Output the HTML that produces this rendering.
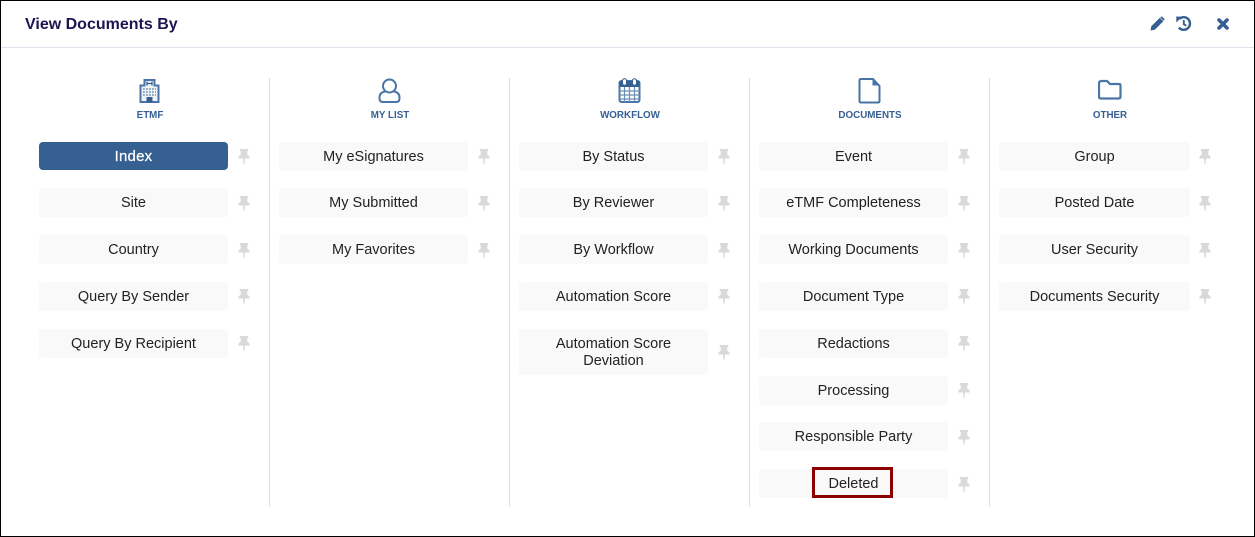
<!DOCTYPE html>
<html><head><meta charset="utf-8">
<style>
html,body{margin:0;padding:0;background:#fff}
#p{position:relative;width:1255px;height:537px;overflow:hidden;background:#fff;font-family:"Liberation Sans",sans-serif}
#f{position:absolute;left:0;top:0;width:1253px;height:535px;border:1px solid #000}
#hl{position:absolute;left:1px;top:47px;width:1253px;height:1px;background:#dce3ec}
#t{position:absolute;left:25px;top:14px;font-size:16px;font-weight:bold;color:#1f1450;line-height:22px}
.d{position:absolute;top:78px;width:1px;height:429px;background:#d9dfe8}
.b{position:absolute;width:189px;height:29px;border-radius:4px;background:#f9f9f9;color:#222;font-size:14.5px;line-height:30px;text-align:center}
.b.a{background:#376092;color:#fff;height:28px;font-size:15px;letter-spacing:.2px;-webkit-text-stroke:.25px #fff}
.b.w{line-height:17px;padding-top:7px;height:39px}
.h{position:absolute;top:109px;font-size:9.8px;font-weight:bold;line-height:13px;color:#376092;text-align:center;width:120px}
svg{position:absolute}
#r{position:absolute;left:812px;top:467px;width:75px;height:25px;border:3px solid #8b0000}
</style></head><body>
<div id="p">
<div id="f"></div><div id="hl"></div>
<div id="t">View Documents By</div>

<svg style="left:1150px;top:16px" width="15" height="15" viewBox="0 0 15 15"><path d="M.5 14.500l.8-4.300L9.800 1.700l3.500 3.500-8.500 8.500z" fill="#376092"/><path d="M10.800 .9q.8-.8 1.600 0l1.700 1.700q.8.8 0 1.600l-.5.5-3.300-3.300z" fill="#376092"/></svg>
<svg style="left:1175px;top:15px" width="17" height="17" viewBox="0 0 17 17"><path d="M4.500 3.800A6.300 6.300 0 1 1 3.800 12.500" fill="none" stroke="#376092" stroke-width="2.400"/><path d="M1.200 1.500l6 .2-5.800 5.800z" fill="#376092"/><path d="M8.800 5v4.200l2.500 1.500" fill="none" stroke="#376092" stroke-width="1.900"/></svg>
<svg style="left:1216px;top:17px" width="14" height="14" viewBox="0 0 14 14"><path d="M3 3l8 8M11 3l-8 8" stroke="#376092" stroke-width="3.600" stroke-linecap="round"/></svg>

<div class="d" style="left:269px"></div><div class="d" style="left:509px"></div><div class="d" style="left:749px"></div><div class="d" style="left:989px"></div>

<svg style="left:138px;top:78px" width="23" height="26" viewBox="0 0 23 26"><path d="M2.500 7.500H6.500V2h10v5.500h4V24h-18z" fill="#f0f4f8" stroke="#4a74a6" stroke-width="2"/><path d="M9 3.500v4M14 3.500v4M9 5.500h5" stroke="#376092" stroke-width="1.300"/><path d="M5 11h13M5 14h13M5 17h13" stroke="#6d8fb5" stroke-width="1.500" stroke-dasharray="1.800 1.200"/><rect x="8.500" y="19" width="6" height="5.500" fill="#376092"/></svg>
<svg style="left:378px;top:78px" width="23" height="26" viewBox="0 0 23 26"><circle cx="11.500" cy="8" r="6.500" fill="none" stroke="#4a74a6" stroke-width="2"/><path d="M7 13.500q-5.500 1-5.500 6v1q0 3.500 3.500 3.500h13q3.500 0 3.500-3.500v-1q0-5-5.500-6" fill="none" stroke="#4a74a6" stroke-width="2"/></svg>
<svg style="left:618px;top:78px" width="23" height="25" viewBox="0 0 23 25"><rect x="1.500" y="3" width="20" height="21" rx="2" fill="#fff" stroke="#4a74a6" stroke-width="2"/><rect x="1.500" y="3" width="20" height="6" fill="#376092"/><path d="M1.500 13h20M1.500 17h20M1.500 21h20M6.500 9v15M11.500 9v15M16.500 9v15" stroke="#6d8fb5" stroke-width="1.200"/><rect x="4.500" y=".7" width="4" height="6.500" rx="2" fill="#fff" stroke="#376092"/><rect x="14.500" y=".7" width="4" height="6.500" rx="2" fill="#fff" stroke="#376092"/></svg>
<svg style="left:858px;top:78px" width="23" height="26" viewBox="0 0 23 26"><path d="M3 1h12l6.500 7v15q0 1.500-1.500 1.500H3q-1.500 0-1.500-1.500V2.500Q1.500 1 3 1z" fill="none" stroke="#4a74a6" stroke-width="2"/><path d="M14.500 1v6.500h7z" fill="#4a74a6"/></svg>
<svg style="left:1098px;top:79px" width="24" height="22" viewBox="0 0 24 22"><path d="M3.500 2h5.500l3 3h9q1.500 0 1.500 1.500v11q0 2-2 2H3q-2 0-2-2v-13Q1 2 3.500 2z" fill="none" stroke="#4a74a6" stroke-width="2.200"/></svg>

<div class="h" style="left:90px">ETMF</div>
<div class="h" style="left:330px">MY LIST</div>
<div class="h" style="left:570px">WORKFLOW</div>
<div class="h" style="left:810px">DOCUMENTS</div>
<div class="h" style="left:1050px">OTHER</div>

<div class="b a" style="left:39px;top:142px">Index</div>
<div class="b" style="left:39px;top:188px">Site</div>
<div class="b" style="left:39px;top:235px">Country</div>
<div class="b" style="left:39px;top:282px">Query By Sender</div>
<div class="b" style="left:39px;top:329px">Query By Recipient</div>

<div class="b" style="left:279px;top:142px">My eSignatures</div>
<div class="b" style="left:279px;top:188px">My Submitted</div>
<div class="b" style="left:279px;top:235px">My Favorites</div>

<div class="b" style="left:519px;top:142px">By Status</div>
<div class="b" style="left:519px;top:188px">By Reviewer</div>
<div class="b" style="left:519px;top:235px">By Workflow</div>
<div class="b" style="left:519px;top:282px">Automation Score</div>
<div class="b w" style="left:519px;top:329px">Automation Score<br>Deviation</div>

<div class="b" style="left:759px;top:142px">Event</div>
<div class="b" style="left:759px;top:188px">eTMF Completeness</div>
<div class="b" style="left:759px;top:235px">Working Documents</div>
<div class="b" style="left:759px;top:282px">Document Type</div>
<div class="b" style="left:759px;top:329px">Redactions</div>
<div class="b" style="left:759px;top:376px">Processing</div>
<div class="b" style="left:759px;top:422px">Responsible Party</div>
<div class="b" style="left:759px;top:469px">Deleted</div>

<div class="b" style="left:999px;top:142px;width:191px">Group</div>
<div class="b" style="left:999px;top:188px;width:191px">Posted Date</div>
<div class="b" style="left:999px;top:235px;width:191px">User Security</div>
<div class="b" style="left:999px;top:282px;width:191px">Documents Security</div>

<div id="r"></div>

<svg width="0" height="0"><defs><path id="pin" d="M1.800 0h8.400v2H9.300v3.800q2.400 1 2.400 3.700H7L6.500 15h-1L5 9.500H.3q0-2.700 2.400-3.700V2h-.9z" fill="#d9d9d9"/></defs></svg>
<svg style="left:238px;top:149px" width="12" height="15"><use href="#pin"/></svg>
<svg style="left:238px;top:196px" width="12" height="15"><use href="#pin"/></svg>
<svg style="left:238px;top:243px" width="12" height="15"><use href="#pin"/></svg>
<svg style="left:238px;top:289px" width="12" height="15"><use href="#pin"/></svg>
<svg style="left:238px;top:336px" width="12" height="15"><use href="#pin"/></svg>
<svg style="left:478px;top:149px" width="12" height="15"><use href="#pin"/></svg>
<svg style="left:478px;top:196px" width="12" height="15"><use href="#pin"/></svg>
<svg style="left:478px;top:243px" width="12" height="15"><use href="#pin"/></svg>
<svg style="left:718px;top:149px" width="12" height="15"><use href="#pin"/></svg>
<svg style="left:718px;top:196px" width="12" height="15"><use href="#pin"/></svg>
<svg style="left:718px;top:243px" width="12" height="15"><use href="#pin"/></svg>
<svg style="left:718px;top:289px" width="12" height="15"><use href="#pin"/></svg>
<svg style="left:718px;top:345px" width="12" height="15"><use href="#pin"/></svg>
<svg style="left:958px;top:149px" width="12" height="15"><use href="#pin"/></svg>
<svg style="left:958px;top:196px" width="12" height="15"><use href="#pin"/></svg>
<svg style="left:958px;top:243px" width="12" height="15"><use href="#pin"/></svg>
<svg style="left:958px;top:289px" width="12" height="15"><use href="#pin"/></svg>
<svg style="left:958px;top:336px" width="12" height="15"><use href="#pin"/></svg>
<svg style="left:958px;top:383px" width="12" height="15"><use href="#pin"/></svg>
<svg style="left:958px;top:430px" width="12" height="15"><use href="#pin"/></svg>
<svg style="left:958px;top:477px" width="12" height="15"><use href="#pin"/></svg>
<svg style="left:1199px;top:149px" width="12" height="15"><use href="#pin"/></svg>
<svg style="left:1199px;top:196px" width="12" height="15"><use href="#pin"/></svg>
<svg style="left:1199px;top:243px" width="12" height="15"><use href="#pin"/></svg>
<svg style="left:1199px;top:289px" width="12" height="15"><use href="#pin"/></svg>
</div>
</body></html>
